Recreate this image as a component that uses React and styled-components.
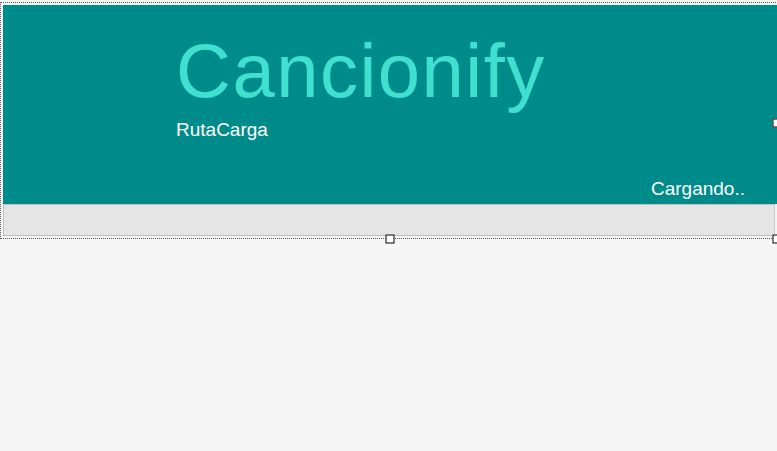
import * as React from 'react'
import styled, { createGlobalStyle } from 'styled-components'

const GlobalStyle = createGlobalStyle`
    html {
        overflow: hidden;
    }

    body {
        margin: 0;
        min-height: 100vh;
        background: #F5F5F5;
        font-family: "Liberation Sans", Arial, sans-serif;
    }
`

// Designer selection frame round the form
const StyledFrame = styled.div`
    position: relative;
    box-sizing: border-box;
    width: 780px;
    margin-top: 2px;
    padding: 2px;
    border: 1px dotted #5a5a5a;
`

// Resize grips sit over the frame's border
const StyledHandle = styled.span`
    position: absolute;
    width: 7px;
    height: 7px;
    background: #FFFFFF;
    border: 1px solid #000000;
    left: ${(props) => props.x};
    top: ${(props) => props.y};
    transform: translate(-50%, -50%);
`

const StyledHeader = styled.header`
    display: flex;
    flex-direction: column;
    height: 199px;
    box-sizing: border-box;
    padding: 28px 32px 6px 173px;
    background: #008B8B;
`

const StyledTitle = styled.h1`
    margin: 0;
    font-size: 76px;
    font-weight: 400;
    line-height: 1;
    letter-spacing: 1.5px;
    color: #40E0D0;
`

const StyledLabel = styled.span`
    font-size: 19px;
    line-height: 19px;
    color: #FFFFFF;
`

const StyledSubtitle = styled(StyledLabel)`
    margin-top: 11px;
`

const StyledStatus = styled(StyledLabel)`
    margin-top: auto;
    align-self: flex-end;
`

const StyledStatusBar = styled.div`
    height: 32px;
    box-sizing: border-box;
    margin-right: 2px;
    background: #E5E5E5;
    border: 1px solid #BFBFBF;
    border-right-color: #C8C8C8;
`

const App = () => {
    return (
        <>
            <GlobalStyle />
            <StyledFrame>
                <StyledHeader>
                    <StyledTitle>Cancionify</StyledTitle>
                    <StyledSubtitle>RutaCarga</StyledSubtitle>
                    <StyledStatus>Cargando..</StyledStatus>
                </StyledHeader>
                <StyledStatusBar />
                <StyledHandle x="50%" y="calc(100% + 0.5px)" />
                <StyledHandle x="calc(100% - 2px)" y="120px" />
                <StyledHandle x="calc(100% - 2px)" y="calc(100% + 0.5px)" />
            </StyledFrame>
        </>
    )
}

export default App
